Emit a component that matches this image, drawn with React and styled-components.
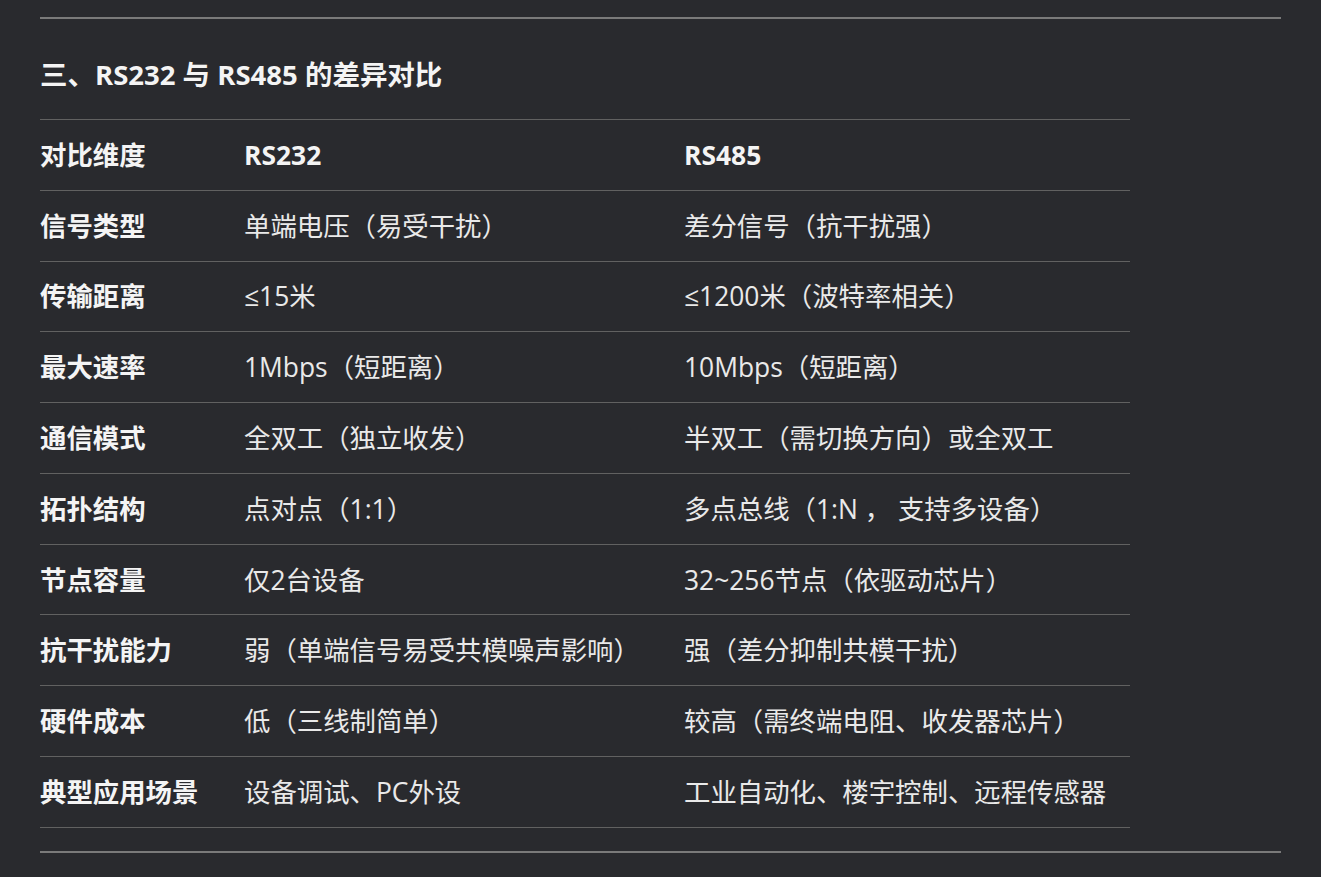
import React from "react";
import styled, { createGlobalStyle } from "styled-components";

const GlobalStyle = createGlobalStyle`
  html, body {
    margin: 0;
    padding: 0;
    background-color: #292a2e;
  }
  body {
    font-family: "Open Sans", "Noto Sans CJK SC", sans-serif;
    color: #ececec;
  }
`;

const Page = styled.div`
  padding: 17px 40px 0 40px;
  min-height: 860px;
  box-sizing: border-box;
`;

const Rule = styled.hr`
  margin: 0;
  border: none;
  height: 2px;
  background-color: #7a7a7a;
`;

const Heading = styled.h3`
  margin: 36px 0 24px 0;
  font-size: 27.5px;
  line-height: 40px;
  font-weight: 700;
  color: #f4f4f4;
`;

const Table = styled.table`
  width: 1090px;
  border-collapse: collapse;
  table-layout: fixed;
  margin-bottom: 23px;
  border-top: 1px solid #616161;
`;

const Row = styled.tr`
  border-bottom: 1px solid #616161;
`;

const Cell = styled.td`
  padding: 14.9px 0;
  height: 40px;
  font-size: 26.4px;
  line-height: 40px;
  font-weight: ${(props) => (props.bold ? 700 : 400)};
  color: ${(props) => (props.bold ? "#f4f4f4" : "#e9e9e9")};
  white-space: nowrap;
  vertical-align: middle;
`;

const HeadCell = styled(Cell).attrs({ as: "th" })`
  text-align: left;
`;

const rows = [
  ["信号类型", "单端电压（易受干扰）", "差分信号（抗干扰强）"],
  ["传输距离", "≤15米", "≤1200米（波特率相关）"],
  ["最大速率", "1Mbps（短距离）", "10Mbps（短距离）"],
  ["通信模式", "全双工（独立收发）", "半双工（需切换方向）或全双工"],
  ["拓扑结构", "点对点（1:1）", "多点总线（1:N ， 支持多设备）"],
  ["节点容量", "仅2台设备", "32~256节点（依驱动芯片）"],
  ["抗干扰能力", "弱（单端信号易受共模噪声影响）", "强（差分抑制共模干扰）"],
  ["硬件成本", "低（三线制简单）", "较高（需终端电阻、收发器芯片）"],
  ["典型应用场景", "设备调试、PC外设", "工业自动化、楼宇控制、远程传感器"],
];

export default function App() {
  return (
    <>
      <GlobalStyle />
      <Page>
        <Rule />
        <Heading>三、RS232 与 RS485 的差异对比</Heading>
        <Table>
          <colgroup>
            <col style={{ width: 204 }} />
            <col style={{ width: 440 }} />
            <col style={{ width: 446 }} />
          </colgroup>
          <thead>
            <Row>
              <HeadCell bold>对比维度</HeadCell>
              <HeadCell bold>RS232</HeadCell>
              <HeadCell bold>RS485</HeadCell>
            </Row>
          </thead>
          <tbody>
            {rows.map((r) => (
              <Row key={r[0]}>
                <Cell bold>{r[0]}</Cell>
                <Cell>{r[1]}</Cell>
                <Cell>{r[2]}</Cell>
              </Row>
            ))}
          </tbody>
        </Table>
        <Rule />
      </Page>
    </>
  );
}
